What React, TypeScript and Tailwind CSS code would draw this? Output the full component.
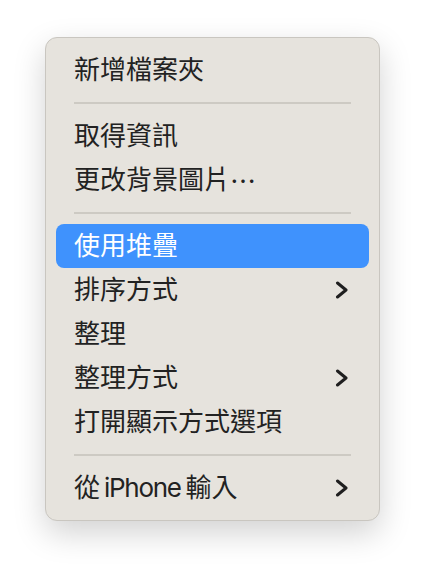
import React from "react";

type Item =
  | { type: "sep" }
  | { type: "item"; label: React.ReactNode; sub?: boolean; active?: boolean };

const items: Item[] = [
  { type: "item", label: "新增檔案夾" },
  { type: "sep" },
  { type: "item", label: "取得資訊" },
  {
    type: "item",
    label: (
      <>
        更改背景圖片
        <span style={{ fontFamily: '"Noto Sans CJK TC", sans-serif' }}>⋯</span>
      </>
    ),
  },
  { type: "sep" },
  { type: "item", label: "使用堆疊", active: true },
  { type: "item", label: "排序方式", sub: true },
  { type: "item", label: "整理" },
  { type: "item", label: "整理方式", sub: true },
  { type: "item", label: "打開顯示方式選項" },
  { type: "sep" },
  {
    type: "item",
    label: (
      <>
        從<span className="ml-[4px] tracking-[-0.05em]">iPhone</span>
        <span className="ml-[5px]">輸入</span>
      </>
    ),
    sub: true,
  },
];

function Chevron({ white }: { white?: boolean }) {
  return (
    <svg width="14" height="18" viewBox="0 0 14 18" fill="none">
      <polyline
        points="2.5,2 11,9 2.5,16"
        stroke={white ? "#ffffff" : "#1f1f1f"}
        strokeWidth="3"
        strokeLinecap="round"
        strokeLinejoin="round"
      />
    </svg>
  );
}

export default function App() {
  return (
    <div className="w-[424px] h-[574px] bg-white pt-[37px] pl-[45px]">
      <div
        className="w-[335px] rounded-[12px] border border-[#c9c6c0] bg-[#e6e3dd] py-[10px] shadow-[0_12px_32px_rgba(0,0,0,0.18)]"
        style={{ fontFamily: '"Inter", "Noto Sans CJK TC", sans-serif' }}
      >
        {items.map((it, i) =>
          it.type === "sep" ? (
            <div key={i} className="h-[22px] flex items-center px-[28px]">
              <div className="h-[2px] w-full bg-[#cdcac3]" />
            </div>
          ) : (
            <div
              key={i}
              className={
                "mx-[10px] h-[44px] rounded-[8px] flex items-center justify-between pl-[18px] pr-[20px] text-[26px] leading-none " +
                (it.active ? "bg-[#3f92fd] text-white" : "text-[#222222]")
              }
            >
              <span className="flex items-center">{it.label}</span>
              {it.sub ? <Chevron white={it.active} /> : null}
            </div>
          )
        )}
      </div>
    </div>
  );
}
